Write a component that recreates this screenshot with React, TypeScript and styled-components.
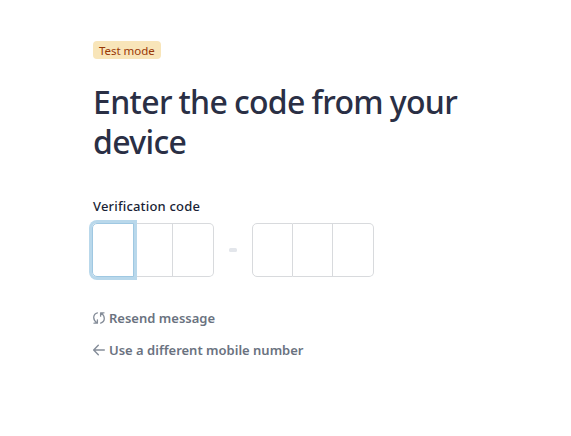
import React from 'react';
import styled, { createGlobalStyle } from 'styled-components';

const GlobalStyle = createGlobalStyle`
  *, *::before, *::after { box-sizing: border-box; }
  body {
    margin: 0;
    background: #fff;
    font-family: 'Noto Sans', 'Open Sans', sans-serif;
  }
`;

const Page = styled.main`
  display: flex;
  flex-direction: column;
  align-items: flex-start;
  min-height: 436px;
  padding: 41px 93px 0;
`;

const Badge = styled.span`
  height: 18px;
  padding: 0 6px;
  border-radius: 4px;
  background: #f8e5b9;
  color: #983705;
  font-size: 11.5px;
  font-weight: 400;
  line-height: 19px;
  letter-spacing: -0.04px;
  white-space: nowrap;
`;

const Title = styled.h1`
  width: 384px;
  margin: 23px 0 0;
  color: #2a2f45;
  font-size: 32px;
  font-weight: 500;
  line-height: 40px;
  letter-spacing: -0.65px;
  word-spacing: -1px;
`;

const Label = styled.label`
  margin-top: 34px;
  color: #1a1f36;
  font-size: 13px;
  font-weight: 500;
  line-height: 20px;
  letter-spacing: 0.18px;
`;

const CodeRow = styled.div`
  display: flex;
  align-items: center;
  margin: 7px 0 0 -1px;
`;

const DigitGroup = styled.div`
  display: flex;
`;

const Digit = styled.input`
  width: 41px;
  height: 54px;
  margin: 0;
  padding: 0;
  border: 1px solid #d8dadd;
  border-radius: 0;
  background: transparent;
  outline: none;
  text-align: center;
  font: 500 24px 'Noto Sans', sans-serif;

  &:not(:first-child) {
    border-left: 0;
  }
  &:nth-child(2) {
    width: 40px;
  }
  &:first-child {
    border-radius: 5px 0 0 5px;
  }
  &:last-child {
    border-radius: 0 5px 5px 0;
  }
  &&[data-active='true'] {
    width: 42px;
    margin-right: -1px;
    border-color: #9fc8e2;
    box-shadow: 0 0 0 3px #b9d8eb;
    z-index: 1;
  }
`;

const Dash = styled.span`
  width: 8px;
  height: 4px;
  margin: 0 15px;
  border-radius: 1.5px;
  background: #e3e6eb;
`;

const Actions = styled.nav`
  display: flex;
  flex-direction: column;
  align-items: flex-start;
  gap: 12px;
  margin-top: 31px;
`;

const Action = styled.button`
  display: flex;
  align-items: center;
  gap: 4px;
  padding: 0;
  border: 0;
  background: none;
  color: #6a7280;
  font: 600 13px/20px 'Noto Sans', 'Open Sans', sans-serif;
  letter-spacing: 0;
  white-space: nowrap;

  svg {
    flex: none;
    color: #858d99;
  }
`;

const ResendIcon = () => (
  <svg width="12" height="12" viewBox="0 0 12 12" fill="none" stroke="currentColor" strokeWidth="1.3" strokeLinecap="round" strokeLinejoin="round">
    <path d="M4.4.9C-.2 2.2-.6 7.6 3.9 10.9M1 11.2h3.4V7.8" />
    <path d="M7.6 11.1C12.2 9.8 12.6 4.4 8.1 1.1M11 .8H7.6v3.4" />
  </svg>
);

const BackIcon = () => (
  <svg width="12" height="12" viewBox="0 0 12 12" fill="none" stroke="currentColor" strokeWidth="1.4" strokeLinecap="round" strokeLinejoin="round">
    <path d="M11.3 6H.9M5.3 1.2.7 6l4.6 4.8" />
  </svg>
);

const digits = [0, 1, 2];

export default function App() {
  return (
    <>
      <GlobalStyle />
      <Page>
        <Badge>Test mode</Badge>
        <Title>Enter the code from your device</Title>
        <Label htmlFor="digit-0">Verification code</Label>
        <CodeRow>
          <DigitGroup>
            {digits.map((i) => (
              <Digit key={i} id={`digit-${i}`} maxLength={1} inputMode="numeric" data-active={i === 0} aria-label={`Digit ${i + 1}`} />
            ))}
          </DigitGroup>
          <Dash />
          <DigitGroup>
            {digits.map((i) => (
              <Digit key={i} id={`digit-${i + 3}`} maxLength={1} inputMode="numeric" aria-label={`Digit ${i + 4}`} />
            ))}
          </DigitGroup>
        </CodeRow>
        <Actions>
          <Action type="button"><ResendIcon />Resend message</Action>
          <Action type="button"><BackIcon />Use a different mobile number</Action>
        </Actions>
      </Page>
    </>
  );
}
